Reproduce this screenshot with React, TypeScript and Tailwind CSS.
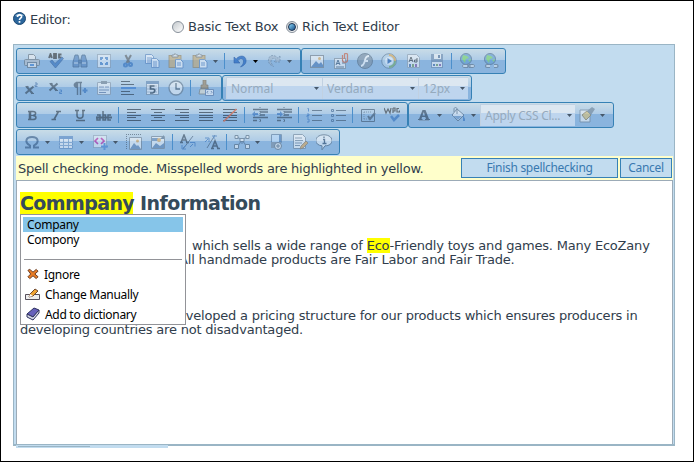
import React from "react";

const ink = "#46586b";

const icons: Record<string, React.ReactNode> = {
  print: (
    <g stroke="#5f6a75" strokeWidth="1">
      <path d="M4.500 6V1.500h5l2 2V6" fill="#f2f2f2" />
      <rect x=".5" y="6.500" width="15" height="6" rx="1" fill="#bcc0c5" />
      <rect x="3.500" y="9.500" width="9" height="5" fill="#eee" />
      <path d="M6 12h4" stroke="#3b7ed0" strokeWidth="2" />
    </g>
  ),
  spell: (
    <g>
      <path d="M1 5l1.500-4L4 5M1.500 3.500h2M6 1v4h2V3H6h2V1zM13.500 1.500H11v3h2.500" stroke="#222" strokeWidth="1.800" fill="none" />
      <path d="M2 8.500l2-1.500 3 3.500L14 4l1.500 1.500L7.500 15z" fill="#2868b8" stroke="#1b4480" strokeWidth=".7" />
    </g>
  ),
  find: (
    <g fill="#4d7db8" stroke="#24476f" strokeWidth=".8">
      <path d="M3 2h3l1 4v8H1V9zM10 2h3l2 7v5H9V6z" />
      <path d="M7 7h2v3H7z" />
      <path d="M2 10h4M10 10h4" stroke="#fff" />
    </g>
  ),
  selectAll: (
    <g>
      <rect x="1.500" y="1.500" width="13" height="13" fill="#edf4fc" stroke="#536070" strokeDasharray="1 1" />
      <path d="M4 4h3v3H4zM9 4h3v3H9zM4 9h3v3H4zM9 9h3v3H9z" fill="#4680c7" />
      <path d="M6 6h4v4H6z" fill="#edf4fc" />
    </g>
  ),
  cut: (
    <g fill="none" strokeWidth="2">
      <path d="M5.500 2l4 8M11 2l-4.500 8" stroke="#555" />
      <circle cx="5.500" cy="12" r="1.500" stroke="#2868b8" />
      <circle cx="10.500" cy="11.500" r="1.500" stroke="#2868b8" />
    </g>
  ),
  copy: (
    <g fill="#f4f8ff" stroke="#4777b5" strokeWidth=".9">
      <path d="M1.500 1.500h6l2 2v7h-8zM3 5h5M3 7h5M3 9h4" />
      <path d="M7.500 5.500h5l2.500 2.500v6.500H7.500zM9 9h4M9 11h4M9 13h4" />
    </g>
  ),
  paste: (
    <g>
      <rect x="1" y="2.500" width="12" height="12" fill="#cba96a" stroke="#8c7040" strokeWidth=".8" />
      <path d="M4 4V2h2l1-1.500L8.500 2H10v2z" fill="#eee" stroke="#555" strokeWidth=".8" />
      <path d="M7.500 6.500h5L15 9v6H7.500zM9 10h4M9 12h4" fill="#fff" stroke="#4777b5" strokeWidth=".9" />
    </g>
  ),
  undo: (
    <path d="M2 4v6h6L5.800 7.800C8 5 12 5.500 11.500 9c-.2 2-1.500 3.500-3 5 4-1.500 6-4 5.500-7C13.500 2.500 8 1.500 4.200 6z" fill="#2a6cc4" stroke="#1d4f98" strokeWidth=".6" />
  ),
  redo: (
    <path d="M14 3v6H8l2.200-2.200C8 4.500 5 5.500 5 8.500c0 2 1.500 3.500 2.500 5C4 12 2 10 2.500 6.500 3 2 8 1 11.800 5z" fill="#9cb0c6" stroke="#567292" strokeWidth=".8" strokeDasharray="2 1" />
  ),
  image: (
    <g>
      <rect x="1.500" y="2.500" width="13" height="12" fill="#f4f7fa" stroke="#6b7782" />
      <path d="M2 14l5-6 3 3 2-2 2 3v2z" fill="#4878b4" />
      <circle cx="10.500" cy="5.500" r="1.500" fill="#e3a44a" />
    </g>
  ),
  attach: (
    <g>
      <rect x="1.500" y="5.500" width="11" height="10" fill="#f4f7fa" stroke="#7c8995" />
      <path d="M3 12l2-5 2 5M3.700 10.500h2.600M9 10h3M3 14h8" stroke="#34506e" fill="none" />
      <path d="M9.500 2v5c0 3 5 3 5 0V1.500c0-1.500-3-1.500-3 0V6" stroke="#c8502c" fill="none" strokeWidth="1.200" />
    </g>
  ),
  flash: (
    <g>
      <circle cx="8" cy="8" r="7.500" fill="#77899c" stroke="#4d6379" />
      <path d="M12 3C8 3 8.500 6 7.500 9S6 13 4 13M7 8h4" stroke="#fff" strokeWidth="1.800" fill="none" />
    </g>
  ),
  media: (
    <g>
      <circle cx="8" cy="8" r="7.300" fill="#b8d3e8" stroke="#56728e" />
      <path d="M8 2a6 6 0 0 1 6 6" stroke="#e5a33c" strokeWidth="2" fill="none" />
      <path d="M14 8a6 6 0 0 1-6 6" stroke="#69a45b" strokeWidth="2" fill="none" />
      <circle cx="8" cy="8" r="4" fill="#eef7ff" />
      <path d="M6.500 5l4.500 3-4.500 3z" fill="#1d59a8" />
    </g>
  ),
  doc: (
    <g>
      <path d="M2.500 1.500h9l3 3v10h-12z" fill="#f5f7fa" stroke="#8b99a8" />
      <path d="M4 9l2-5 2 5M5 7.500h2M12 5v4H9.500V7H12" stroke="#333" fill="none" />
      <path d="M4 11h2v3H4z" fill="#3b65a5" /><path d="M7 11h2v3H7z" fill="#6c9653" /><path d="M10 11h2v3h-2z" fill="#804da2" />
    </g>
  ),
  save: (
    <g>
      <path d="M2 1h12v14H2z" fill="#6684a8" /><path d="M5 1h7v5H5zM3 9h10v5H3z" fill="#f4f6f8" />
      <path d="M9 2h2v3H9z" fill="#46658d" />
      <path d="M4 11h2v2H4z" fill="#3b65a5" /><path d="M7 11h2v2H7z" fill="#6c9653" /><path d="M10 11h2v2h-2z" fill="#804da2" />
    </g>
  ),
  link: (
    <g>
      <circle cx="7" cy="6" r="5.500" fill="#5e9ad2" stroke="#45627f" />
      <path d="M4 2l4 1 2 2-3 1-1 4-3-4zM9 7l3-1-1 3z" fill="#75d957" />
      <path d="M5 11.500h4v3H5c-2 0-2-3 0-3zM10 11.500h4c2 0 2 3 0 3h-4zM8 13h4" stroke="#5d6e80" fill="#dfe7ed" />
    </g>
  ),
  unlink: (
    <g>
      <circle cx="7" cy="6" r="5.500" fill="#5e9ad2" stroke="#45627f" />
      <path d="M4 2l4 1 2 2-3 1-1 4-3-4zM9 7l3-1-1 3z" fill="#75d957" />
      <path d="M7 11.500H4c-2 0-2 3 0 3h3M11 11.500h2.500c2 0 2 3 0 3H11" stroke="#5d6e80" fill="#dfe7ed" strokeWidth="1.200" />
    </g>
  ),
  sup: (
    <g><path d="M2.500 6.500l6 7M9.500 6.500l-8 7" stroke="#2b3b4b" strokeWidth="2" /><path d="M1.500 6.500h3M7 13.500h3" stroke="#2b3b4b" /><path d="M11 3h2v2h-2v1.500h2.500" stroke="#2f5f9c" fill="none" /></g>
  ),
  sub: (
    <g><path d="M2.500 3.500l6 7M9.500 3.500l-8 7" stroke="#2b3b4b" strokeWidth="2" /><path d="M1.500 3.500h3M7 10.500h3" stroke="#2b3b4b" /><path d="M11.500 10h2v2h-2v1.500H14" stroke="#2868b8" fill="none" /></g>
  ),
  para: (
    <g><path d="M10 2.500H4M5.500 3v12M8.500 3v12" stroke="#34485e" strokeWidth="1.400" fill="none" /><path d="M5 2C.5 2 .5 8 5 8z" fill="#34485e" /><path d="M10.500 10.500h5M13 8v5" stroke="#2868b8" strokeWidth="2" /></g>
  ),
  clip: (
    <g>
      <path d="M1.500 2.500h13v12h-13z" fill="#edf3f9" stroke="#8291a3" />
      <path d="M5 1h6v3H5z" fill="#657688" />
      <path d="M3 7h5M9 7h4M3 10h10M3 12.500h7" stroke="#6078a0" />
    </g>
  ),
  rule: (<g><path d="M1 1.500h9M1 4.500h13M1 11.500h9M1 14.500h13" stroke="#1c2a38" /><path d="M1 8h15" stroke="#2c71cd" strokeWidth="2" /></g>),
  date: (
    <g><rect x="2.500" y="1.500" width="12" height="13" fill="#f2f5fa" stroke="#7188a0" /><path d="M2 1h13v3H2z" fill="#577fae" /><path d="M3 6h10M3 9h10M3 12h10" stroke="#9aabc0" /><path d="M10.500 6H6.500v3h3c2 .5 1.500 4-1 4H6" stroke="#1a2b3c" strokeWidth="1.700" fill="none" /></g>
  ),
  clock: (
    <g><circle cx="8" cy="8" r="7" fill="#edf2f8" stroke="#5b6f84" strokeWidth="1.300" /><path d="M8 3v6h4" stroke="#35485b" fill="none" strokeWidth="1.300" /></g>
  ),
  strip: (
    <g><path d="M5 0h3v5h2v4H3V5h2z" fill="#8f7550" stroke="#57462f" strokeWidth=".7" /><path d="M2 9h9v5H1z" fill="#e8e2cf" stroke="#67655c" strokeWidth=".8" /><path d="M7.500 9.500h8v6h-8zM10 11l-1 1.500 1 1M13 11l1 1.500-1 1" fill="#f6f8fc" stroke="#4c6898" strokeWidth=".9" /></g>
  ),
  bold: (<g fill="none" stroke="#222f3c"><path d="M4 4.500h5c3.500 0 3.500 3.500 0 4 4 .3 4 4-.5 4H4" strokeWidth="1.500" /><path d="M6 4.500v8" strokeWidth="2.500" /><path d="M6 8.500h3" /></g>),
  italic: (<path d="M8 4.500h5M10.500 4.500L6 12.500M3.500 12.500h4.500" stroke="#222f3c" strokeWidth="1.600" fill="none" />),
  underline: (<path d="M3 3.500h4M10 3.500h3M5 3.500v5c0 3.500 6 3.500 6 0v-5M4 13.500h9" stroke="#222f3c" strokeWidth="1.500" fill="none" />),
  strike: (
    <g stroke="#222f3c" strokeWidth="1.500" fill="none"><path d="M1 8h3v5H1v-2.500h3M7 4v9h2.500V8H7M15 8h-3v5h3" /><path d="M0 10.500h16" strokeWidth="2" /></g>
  ),
  left: (<path d="M1 2.500h14M1 5.500h9M1 8.500h14M1 10.500h9M1 13.500h14" stroke="#111d2b" />),
  center: (<path d="M1 2.500h14M4 5.500h8M1 8.500h14M4 10.500h8M1 13.500h14" stroke="#111d2b" />),
  right: (<path d="M1 2.500h14M6 5.500h9M1 8.500h14M6 10.500h9M1 13.500h14" stroke="#111d2b" />),
  full: (<path d="M1 2.500h14M1 5.500h14M1 8.500h14M1 10.500h14M1 13.500h14" stroke="#111d2b" />),
  none: (<g><path d="M1 2.500h14M1 5.500h14M1 8.500h14M1 10.500h14M1 13.500h14" stroke="#111d2b" /><path d="M1.500 14.500L14.500 2" stroke="#e04518" strokeWidth="1.700" /></g>),
  outdent: (<g><path d="M1 2.500h15M8 5h8M8 8h5M1 10.500h15M8 13.500h1M1 13.500h4" stroke="#26384b" strokeWidth="1.400" /><path d="M8 0v16" stroke="#26384b" strokeDasharray="1 1" /><path d="M0 7l3-3v2h3v2H3v2z" fill="#2868b8" /></g>),
  indent: (<g><path d="M1 2.500h15M8 5h8M8 8h5M1 10.500h15M8 13.500h1M1 13.500h4" stroke="#26384b" strokeWidth="1.400" /><path d="M8 0v16" stroke="#26384b" strokeDasharray="1 1" /><path d="M7 7L4 4v2H1v2h3v2z" fill="#2868b8" /></g>),
  ol: (<g><path d="M6 3.500h10M6 8.500h10M6 13.500h10" stroke="#344a61" /><path d="M1.500 1.500h1v3M1 7h2v1.500H1V10h2M1 12h2v3H1" stroke="#2868b8" fill="none" /></g>),
  ul: (<g><path d="M6 3.500h10M6 8.500h10M6 13.500h10" stroke="#344a61" /><path d="M1.500 2.500h2v2h-2zM1.500 7.500h2v2h-2zM1.500 12.500h2v2h-2z" stroke="#315987" fill="none" /></g>),
  track: (<g fill="none"><path d="M1.500 2.500h13v12h-13z" stroke="#344a61" /><path d="M4 5h8M4 12h8M4 5v7" stroke="#5b7087" strokeDasharray="1 1" /><path d="M8 9l2 3 5-6" stroke="#344a61" strokeWidth="2" /></g>),
  xhtml: (<g fill="none"><path d="M0 1l2 5 2-4 2 4 1-5M9 1v5M9 1h2v3H9M15 1.500h-2V5h2.500V3.500" stroke="#222" strokeWidth="1.200" /><path d="M7 9l3 4 5-5" stroke="#2868b8" strokeWidth="2.500" /></g>),
  color: (<g><path d="M6.500 3h3l3.500 9h1v1H9v-1h1l-.7-2H6L5.500 12h1v1H2v-1h1zM7.800 5L6.500 8.500H9z" fill="#22364c" /><path d="M3 13h10v1H3z" fill="#748da9" /></g>),
  fill: (<g><path d="M7 2l7 6-6 6-6-6z" fill="#e7eff8" stroke="#455e78" /><path d="M3 9h9l-4 4z" fill="#6b95c4" /><path d="M7 7V2c0-2-3-2-3 0v3" stroke="#455e78" fill="none" /><path d="M13 8l2 4v2h-2z" fill="#2868b8" /></g>),
  brush: (<g><path d="M1 3h10v12H1z" fill="#f2f4f6" stroke="#67798b" /><path d="M3 8l5-4 4 4-5 5z" fill="#e0c16d" stroke="#8d7845" /><path d="M8 4l5-4 3 2-4 6z" fill="#63798e" /></g>),
  omega: (<path d="M1 13.500h5v-2C0 8 2 3 8 3s8 5 2 8.500v2h5" stroke="#294e7a" strokeWidth="2" fill="none" />),
  table: (<g><path d="M1.500 2.500h13v12h-13z" fill="#f4f7fb" stroke="#5784bb" /><path d="M1 2h14v3H1z" fill="#4b7fc0" /><path d="M1 8.500h14M1 11.500h14M5.500 5v9M10.500 5v9" stroke="#7d9fc8" /></g>),
  snippet: (<g fill="none"><path d="M1.500 1.500h13v12h-13z" stroke="#52657a" strokeDasharray="1 1" fill="#e6eff8" /><path d="M6 4L3 7l3 3M9 4l3 3-3 3" stroke="#bf109b" strokeWidth="1.700" /><path d="M9 12.500h7M12.500 9v7" stroke="#3a7bd0" strokeWidth="2" /></g>),
  imgmap: (<g><path d="M0 .5h16M.5 0v16" stroke="#3b4e61" strokeDasharray="1 1" /><path d="M3.500 3.500h12v12h-12z" fill="#f3f6f9" stroke="#69798a" /><path d="M4 15l4-6 3 3 1-1 3 4z" fill="#587fad" /><circle cx="11.500" cy="7" r="1.500" fill="#e3a44a" /></g>),
  imgedit: (<g><path d="M1.500 2.500h13v12h-13z" fill="#f3f6f9" stroke="#69798a" /><path d="M2 4h6v3H2zM2 14l4-5 4 3 4-3v5z" fill="#587fad" /><circle cx="9" cy="6" r="2" fill="#e3a44a" /><path d="M10 5l4-4v4z" fill="#4d6884" /></g>),
  upper: (<g fill="none"><path d="M1 8.500L4 1l3 7.500M2 6h4M0 8.500h3M6 8.500h3" stroke="#24364a" strokeWidth="1.500" /><path d="M13 2L3 15" stroke="#3b526b" /><path d="M10 8.500h5v4M13 10l-3 3M2 11v4h4M3 14l3-3" stroke="#2868b8" /></g>),
  lower: (<g fill="none"><path d="M8 14.500L11 7l3 7.500M9 12h4M7 14.500h3M13 14.500h3" stroke="#24364a" strokeWidth="1.600" /><path d="M11 1L3 14" stroke="#3b526b" /><path d="M1 4h4v4M4 5L1 8M10 5V2M8 2h5" stroke="#2868b8" /></g>),
  nodes: (<g><path d="M3 13l5-7 5 7M3 3l5 3 5-3M8 6v4" stroke="#4b6c90" fill="none" strokeWidth="1.200" /><g fill="#edf3f9" stroke="#4b6278"><path d="M.5 10.500h4v4h-4zM11.500 10.500h4v4h-4zM6 4.500h4v3H6zM1 1.500h3v3H1zM12 1.500h3v3h-3z" /></g></g>),
  page: (<g><path d="M3.500 .5h10v8h-10z" fill="#b6d8fa" stroke="#4e7096" /><path d="M3 8h10v6H3z" fill="#77879a" /><path d="M11 1h2v7h-2z" fill="#356dad" /><circle cx="10" cy="12" r="3.500" fill="#eee" stroke="#526477" /><path d="M8 12h4M10 10v4" stroke="#526477" /></g>),
  notes: (<g><path d="M1.500 .5h9l3 3v11h-12zM3 4h7M3 6.500h8M3 9h7M3 11.500h5" fill="#f8f9fb" stroke="#6a7f95" /><path d="M8 15l1-3 5-5 2 2-5 5z" fill="#e0a44e" stroke="#786041" strokeWidth=".7" /></g>),
  info: (<g><path d="M8 .8c10 0 11 11 1 11l-3 4v-4C-3 11-2 .8 8 .8z" fill="#edf4fb" stroke="#3f5872" /><path d="M8 2.500v1.500M7 5.500h1.500V9M6.500 9.500h4" stroke="#24405f" strokeWidth="1.300" fill="none" /></g>),
};

function I({ n, strong = false }: { n: string; strong?: boolean }) {
  return (
    <span className="flex h-6 w-6 shrink-0 items-center justify-center">
      <svg viewBox="0 0 16 16" className={strong ? "h-4 w-4 opacity-75" : "h-4 w-4 opacity-55"}>{icons[n]}</svg>
    </span>
  );
}

function Tri({ dark = false }: { dark?: boolean }) {
  return (
    <svg width="5" height="3" viewBox="0 0 5 3" className="shrink-0">
      <path d="M0 0h5L2.500 3z" fill={dark ? "#000" : ink} />
    </svg>
  );
}

function Arrow({ dark = false }: { dark?: boolean }) {
  return <span className="flex h-6 w-2.5 shrink-0 items-center pl-px"><Tri dark={dark} /></span>;
}

function Sep() {
  return <span className="flex h-6 w-1.5 shrink-0 items-center pl-0.5"><span className="h-4 w-px bg-[#4c8fcb]" /></span>;
}

function Group({ w, children }: { w: string; children: React.ReactNode }) {
  return (
    <div className={`flex h-[26px] shrink-0 items-center rounded-[3px] border border-[#3681b5] bg-linear-to-b from-[#c9dce7] from-0% via-[#afcce7] via-44% to-[#8ab4de] to-44% pl-[3px] ${w}`}>
      <div className="flex h-full items-center">{children}</div>
    </div>
  );
}

function Drop({ w, children }: { w: string; children: React.ReactNode }) {
  return (
    <div className={`flex h-[22px] shrink-0 items-center justify-between border-l border-t border-[#c1d1e2] bg-linear-to-b from-[#dce7f1] from-40% to-[#bed5ee] to-40% pl-1 pr-[3px] font-['Noto_Sans','Open_Sans',sans-serif] text-[12px] leading-none text-[#95aabd] ${w}`}>
      <span className="whitespace-nowrap">{children}</span>
      <Tri />
    </div>
  );
}

function Radio({ on = false }: { on?: boolean }) {
  return (
    <span className="flex h-3 w-3 items-center justify-center rounded-full border border-[#87909a] bg-linear-to-br from-[#c4c9cd] to-white">
      {on && <span className="h-2 w-2 rounded-full border border-[#172d4c] bg-linear-to-br from-[#8edcff] to-[#164c83]" />}
    </span>
  );
}

const verdana = "font-['DejaVu_Sans',Verdana,sans-serif]";

export default function App() {
  return (
    <div className={`h-[462px] w-[694px] overflow-hidden border border-black bg-white text-[#303d4c] ${verdana}`}>
      <header className="flex h-[43px] text-[13px] leading-[16px]">
        <div className="flex w-[171px] gap-1 pl-3 pt-[11px]">
          <svg viewBox="0 0 13 13" className="h-[13px] w-[13px]">
            <circle cx="6.500" cy="6.500" r="6" fill="#2b669c" stroke="#1c4872" />
            <path d="M2 4a5 4 0 0 1 9 0z" fill="#8db7d8" />
            <path d="M4.500 5c0-3 4.500-2.500 4 0-.3 1.300-2 1-2 3M6.500 9v1.800" fill="none" stroke="#fff" strokeWidth="1.700" />
          </svg>
          <span className="tracking-[-0.3px]">Editor:</span>
        </div>
        <label className="flex h-[51px] w-[114px] items-center gap-1 whitespace-nowrap tracking-[-0.2px]"><Radio />Basic Text Box</label>
        <label className="flex h-[51px] items-center gap-1 whitespace-nowrap tracking-[-0.25px]"><Radio on />Rich Text Editor</label>
      </header>

      <main className="ml-3 flex h-[402px] w-[662px] flex-col border border-b-2 border-[#9ab5c5] bg-[#c2dcef] pl-0.5 pr-px pt-[3px]">
        <div className="flex h-[108px] shrink-0 flex-col gap-px">
          <div className="flex">
            <Group w="w-[285px]">
              <I n="print" /><I n="spell" /><I n="find" /><I n="selectAll" /><I n="cut" /><I n="copy" /><I n="paste" /><I n="paste" /><Arrow /><Sep /><I n="undo" strong /><Arrow dark /><I n="redo" /><Arrow />
            </Group>
            <Group w="w-[205px]">
              <I n="image" /><I n="attach" /><I n="flash" /><I n="media" /><I n="doc" /><I n="save" /><Sep /><I n="link" /><I n="unlink" />
            </Group>
          </div>
          <div className="flex">
            <Group w="w-[206px]">
              <I n="sup" /><I n="sub" /><I n="para" /><I n="clip" /><I n="rule" /><I n="date" /><I n="clock" /><Sep /><I n="strip" />
            </Group>
            <Group w="w-[250px]">
              <Drop w="w-24">Normal</Drop><Drop w="w-24">Verdana</Drop><Drop w="w-[50px]">12px</Drop>
            </Group>
          </div>
          <div className="flex">
            <Group w="w-[392px]">
              <I n="bold" /><I n="italic" /><I n="underline" /><I n="strike" /><Sep /><I n="left" /><I n="center" /><I n="right" /><I n="full" /><I n="none" /><Sep /><I n="outdent" /><I n="indent" /><Sep /><I n="ol" /><I n="ul" /><Sep /><I n="track" /><I n="xhtml" />
            </Group>
            <Group w="w-[206px]">
              <I n="color" /><Arrow /><I n="fill" /><Arrow /><Drop w="w-[95px]"><span className="tracking-[-0.25px]">Apply CSS Cl...</span></Drop><I n="brush" /><Arrow />
            </Group>
          </div>
          <div className="flex">
            <Group w="w-[324px]">
              <I n="omega" /><Arrow /><I n="table" /><Arrow /><I n="snippet" /><Arrow /><I n="imgmap" /><I n="imgedit" /><Sep /><I n="upper" /><I n="lower" /><Sep /><I n="nodes" /><Arrow /><I n="page" /><I n="notes" /><I n="info" />
            </Group>
          </div>
        </div>

        <div className="flex h-6 shrink-0 items-center bg-[#ffffcb] pl-0.5 pr-px text-[13px]">
          <span className="flex-1 whitespace-nowrap pt-px tracking-[-0.25px]">Spell checking mode. Misspelled words are highlighted in yellow.</span>
          <div className="flex gap-0.5 font-['Noto_Sans','Open_Sans',sans-serif] text-[12px] leading-none text-[#3979b0]">
            <button className="h-5 w-[157px] border border-[#3681b5] bg-[#c2dcef] pb-px tracking-[-0.3px]">Finish spellchecking</button>
            <button className="h-5 w-[52px] border border-[#3681b5] bg-[#c2dcef] pb-px tracking-[-0.3px]">Cancel</button>
          </div>
        </div>

        <article className="relative flex-1 border border-b-0 border-[#9cabb7] bg-white pl-[3px] text-[13px] leading-[14px] whitespace-nowrap">
          <h1 className="mt-[11px] h-[22px] text-[19px] font-bold leading-[22px] text-[#354b5b]">
            <span className="inline-block h-[22px] w-[113px] bg-[#ffff00] tracking-[-0.6px]">Commpany</span>
            <span className="ml-[7px] tracking-[-0.5px]">Information</span>
          </h1>
          <p className="mt-[25px] pl-[172px] tracking-[-0.2px]">which sells a wide range of <span className="bg-[#ffff00]">Eco</span>-Friendly toys and games. Many EcoZany</p>
          <p className="pl-[159px] tracking-[-0.16px]">All handmade products are Fair Labor and Fair Trade.</p>
          <p className="mt-[42px] pl-[150px] tracking-[-0.21px]">developed a pricing structure for our products which ensures producers in</p>
          <p className="tracking-[-0.2px]">developing countries are not disadvantaged.</p>

          <div className="absolute left-[3px] top-[33px] h-[111px] w-[166px] border border-[#929398] bg-white px-0.5 pt-0.5 font-['Noto_Sans','Open_Sans',sans-serif] text-[12px] leading-[15px] tracking-[-0.3px] text-black">
            <div className="h-[15px] bg-[#86c5e9] pl-1">Company</div>
            <div className="h-[15px] pl-1">Compony</div>
            <div className="mx-px mt-3 border-t border-[#929398]" />
            <div className="mt-1 flex h-5 items-center gap-1.5 pl-1">
              <svg viewBox="0 0 13 12" className="h-3 w-3"><path d="M1 2l2-1 3.500 3L10 1l2 2-3.500 3L12 9l-2 2-3.500-3L3 11 1 9l3-3z" fill="#e77b24" stroke="#64341a" /></svg>
              <span className="-ml-px">Ignore</span>
            </div>
            <div className="flex h-5 items-center gap-1.5 pl-0.5">
              <svg viewBox="0 0 15 13" className="h-[13px] w-[15px]"><path d="M.5 6.500h14v5H.5z" fill="#eee" stroke="#57515c" /><path d="M4 9l1-3 5-5 3 2-5 5z" fill="#f0a534" stroke="#70482d" /><path d="M4 9l1-3 3 2z" fill="#fff" /></svg>
              <span className="-ml-px">Change Manually</span>
            </div>
            <div className="flex h-5 items-center gap-1.5 pl-[3px]">
              <svg viewBox="0 0 14 14" className="h-[14px] w-[14px]"><path d="M1 7l7-6 5 2-6 7z" fill="#6762bb" stroke="#2d315f" /><path d="M1 7v3l6 3 6-7V3l-6 7z" fill="#d6d9e5" stroke="#2d315f" /></svg>
              <span className="-ml-px">Add to dictionary</span>
            </div>
          </div>
        </article>
      </main>
      <div className="relative -mt-px ml-[15px] h-[3px] w-[152px] bg-[#c2dcef] pl-0.5 pt-px"><div className="h-px w-[72px] bg-[#9ab5c5]" /></div>
    </div>
  );
}
